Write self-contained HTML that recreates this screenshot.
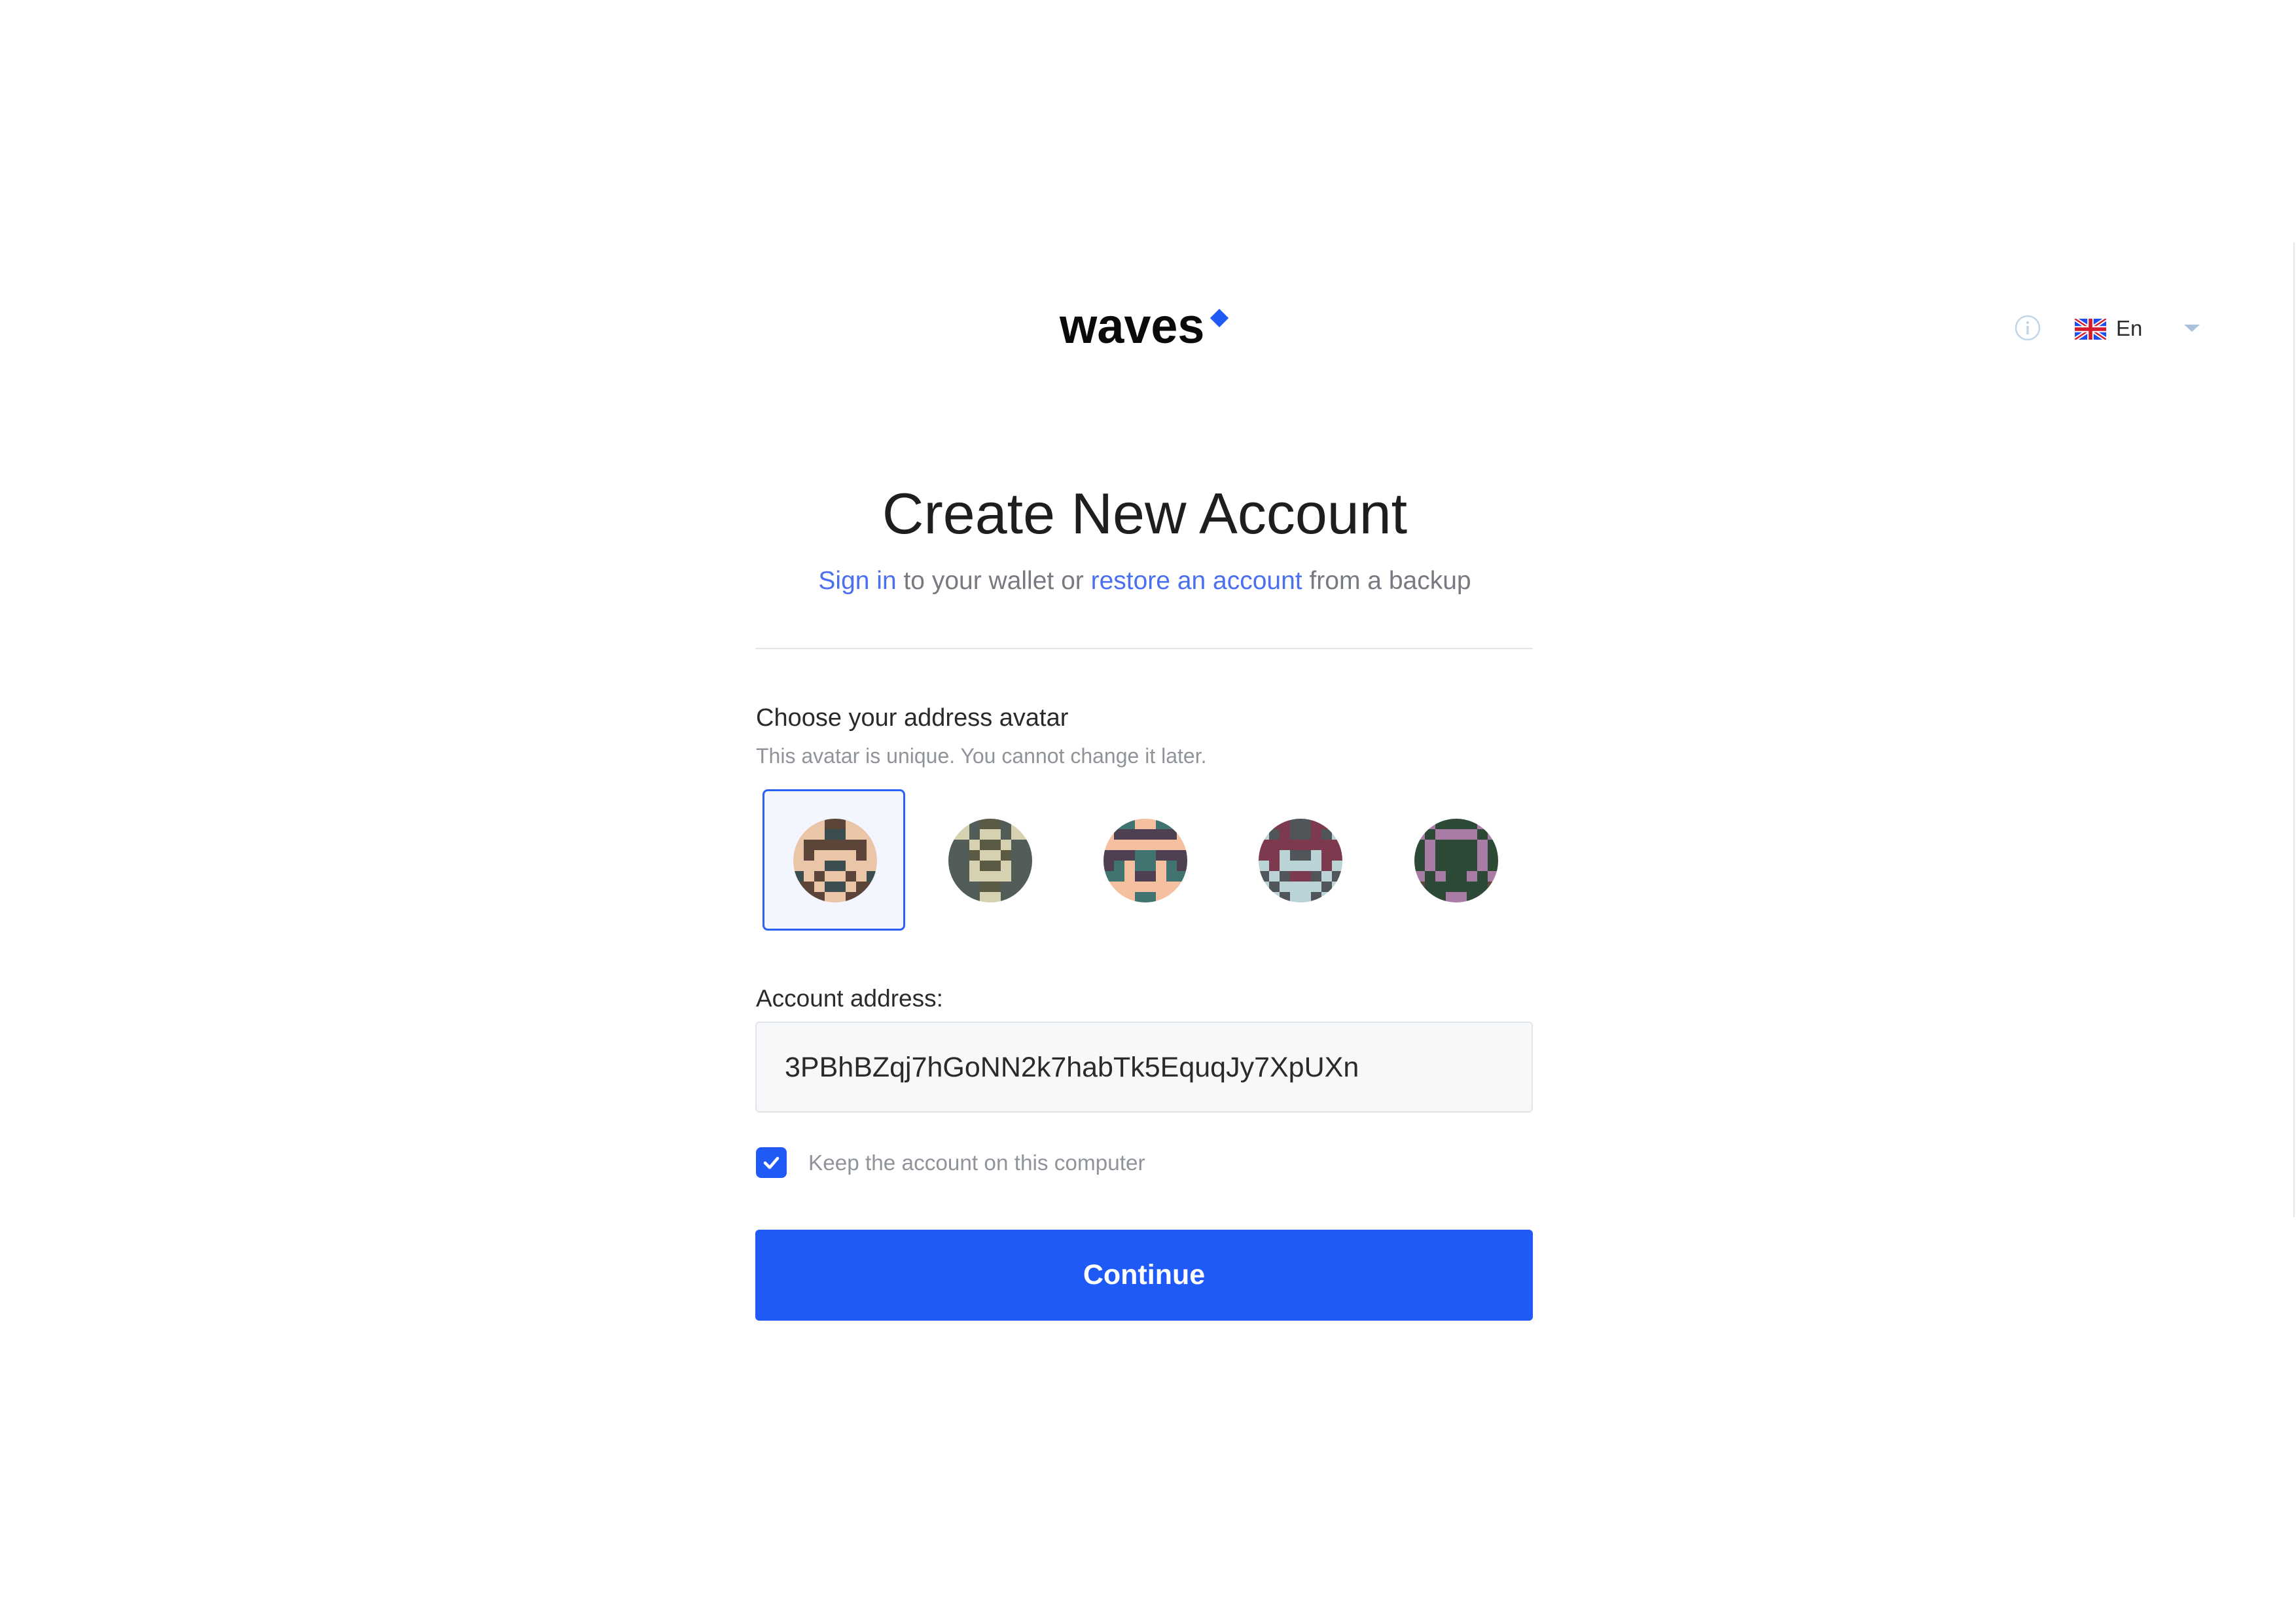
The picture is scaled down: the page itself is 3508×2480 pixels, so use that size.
<!DOCTYPE html>
<html><head><meta charset="utf-8"><style>
*{margin:0;padding:0;box-sizing:border-box}
html,body{width:3508px;height:2480px;background:#fff;overflow:hidden;font-family:"Liberation Sans",Arial,sans-serif;position:relative}
.a{position:absolute;white-space:nowrap}
.av{position:absolute;width:128px;height:128px;border-radius:50%;overflow:hidden;display:grid;grid-template-columns:repeat(8,16px);grid-template-rows:repeat(8,16px);top:1251px}
.av i{display:block}
</style></head><body>
<div class="a" style="left:3504px;top:370px;width:2px;height:1490px;background:#e4e6ea"></div>

<div class="a" style="left:1619px;top:454px;font-size:76px;font-weight:bold;color:#0a0a0a;letter-spacing:0px;line-height:90px;transform:scaleX(0.97);transform-origin:left">waves</div>
<div class="a" style="left:1853px;top:476px;width:20px;height:20px;background:#1f5af6;transform:rotate(45deg)"></div>

<svg class="a" style="left:3078px;top:481px" width="40" height="40" viewBox="0 0 40 40"><circle cx="20" cy="20" r="18" fill="none" stroke="#c3d6e8" stroke-width="2.5"/><circle cx="20" cy="12" r="2.2" fill="#c3d6e8"/><rect x="18.2" y="17" width="3.6" height="13" fill="#c3d6e8"/></svg>
<svg class="a" style="left:3170px;top:487px" width="48" height="32" viewBox="0 0 60 40"><rect width="60" height="40" fill="#1f4cf0"/><path d="M0 0L60 40M60 0L0 40" stroke="#fff" stroke-width="8"/><path d="M0 0L60 40M60 0L0 40" stroke="#d41c2c" stroke-width="3"/><path d="M30 0V40M0 20H60" stroke="#fff" stroke-width="12"/><path d="M30 0V40M0 20H60" stroke="#d41c2c" stroke-width="7"/></svg>
<div class="a" style="left:3233px;top:482px;font-size:33px;color:#2b2b2b;line-height:40px">En</div>
<div class="a" style="left:3337px;top:496px;width:0;height:0;border-left:12px solid transparent;border-right:12px solid transparent;border-top:11px solid #a9c1da"></div>

<div class="a" style="left:0;width:3508px;text-align:center;top:730px;font-size:88px;color:#1e1e1e;line-height:110px;padding-right:10px">Create New Account</div>
<div class="a" style="left:0;width:3508px;text-align:center;top:863px;font-size:39px;color:#777a80;line-height:50px;padding-right:10px"><span style="color:#4a6ff0">Sign in</span> to your wallet or <span style="color:#4a6ff0">restore an account</span> from a backup</div>
<div class="a" style="left:1154px;top:990px;width:1188px;height:2px;background:#e3e5e8"></div>

<div class="a" style="left:1155px;top:1074px;font-size:38px;color:#2a2a2a;line-height:46px">Choose your address avatar</div>
<div class="a" style="left:1155px;top:1136px;font-size:32px;color:#8f939a;line-height:38px">This avatar is unique. You cannot change it later.</div>

<div class="a" style="left:1165px;top:1206px;width:218px;height:216px;border:3px solid #2b62f5;border-radius:8px;background:#f3f6fe"></div>

<div id="avs"></div>

<div class="a" style="left:1155px;top:1503px;font-size:37px;color:#2a2a2a;line-height:46px">Account address:</div>
<div class="a" style="left:1154px;top:1561px;width:1188px;height:139px;border:2px solid #e2e5ea;border-radius:6px;background:#f7f8fa"></div>
<div class="a" style="left:1199px;top:1605px;font-size:43px;color:#2a2a2a;line-height:52px">3PBhBZqj7hGoNN2k7habTk5EquqJy7XpUXn</div>

<div class="a" style="left:1155px;top:1753px;width:47px;height:47px;background:#1f5af6;border-radius:8px"></div>
<svg class="a" style="left:1155px;top:1753px" width="47" height="47" viewBox="0 0 47 47"><path d="M14 24l7 7 12-14" fill="none" stroke="#fff" stroke-width="4.5" stroke-linecap="round" stroke-linejoin="round"/></svg>
<div class="a" style="left:1235px;top:1758px;font-size:33.3px;color:#8f939a;line-height:40px">Keep the account on this computer</div>

<div class="a" style="left:1154px;top:1879px;width:1188px;height:139px;background:#1f5af6;border-radius:6px;color:#fff;font-weight:bold;font-size:43px;text-align:center;line-height:139px">Continue</div>

<script>
var defs=[
 {x:1212,c:{S:'#eac5a8',B:'#5a4538',T:'#3c4d4f'},g:["SSSBBSSS","SSSTTSSS","SBBBBBBS","SBSSSSBS","SSSTTSSS","TSBSSBST","BBSTTSBB","SBBSSBBS"]},
 {x:1449,c:{L:'#d6d1b0',G:'#525c58',O:'#5a5a45'},g:["LLGOOGLL","LLGLLGLL","GGLOOLGG","GGOLLOGG","GGLOOLGG","GGLLLLGG","GGGOOGGG","GGGLLGGG"]},
 {x:1686,c:{P:'#f5c0a0',M:'#4f3f52',T:'#417470'},g:["TTTPPTTT","PMMMMMMP","PPPPPPPP","MMMTTMMM","MTPTTPTM","TTPMMPTT","PPPPPPPP","PPPTTPPP"]},
 {x:1923,c:{R:'#7d3a4f',D:'#505559',C:'#b9d3d6'},g:["RRRDDRRR","CDRDDRDC","RRRRRRRR","RRCDDCRR","CRCCCCRC","DCDRRDCD","CDCCCCDC","CCDCCDCC"]},
 {x:2161,c:{K:'#a87ca5',E:'#2c4a36',W:'#5e4a3a'},g:["KKEEEEKK","KEKKKKEK","EKEEEEKE","EKEEEEKE","EKEEEEKE","KEKEEKEK","WEEEEEEW","EEEKKEEE"]}
];
var h='';
defs.forEach(function(d){h+='<div class="av" style="left:'+d.x+'px">';d.g.forEach(function(r){for(var i=0;i<8;i++)h+='<i style="background:'+d.c[r[i]]+'"></i>';});h+='</div>';});
document.getElementById('avs').innerHTML=h;
</script>
</body></html>
